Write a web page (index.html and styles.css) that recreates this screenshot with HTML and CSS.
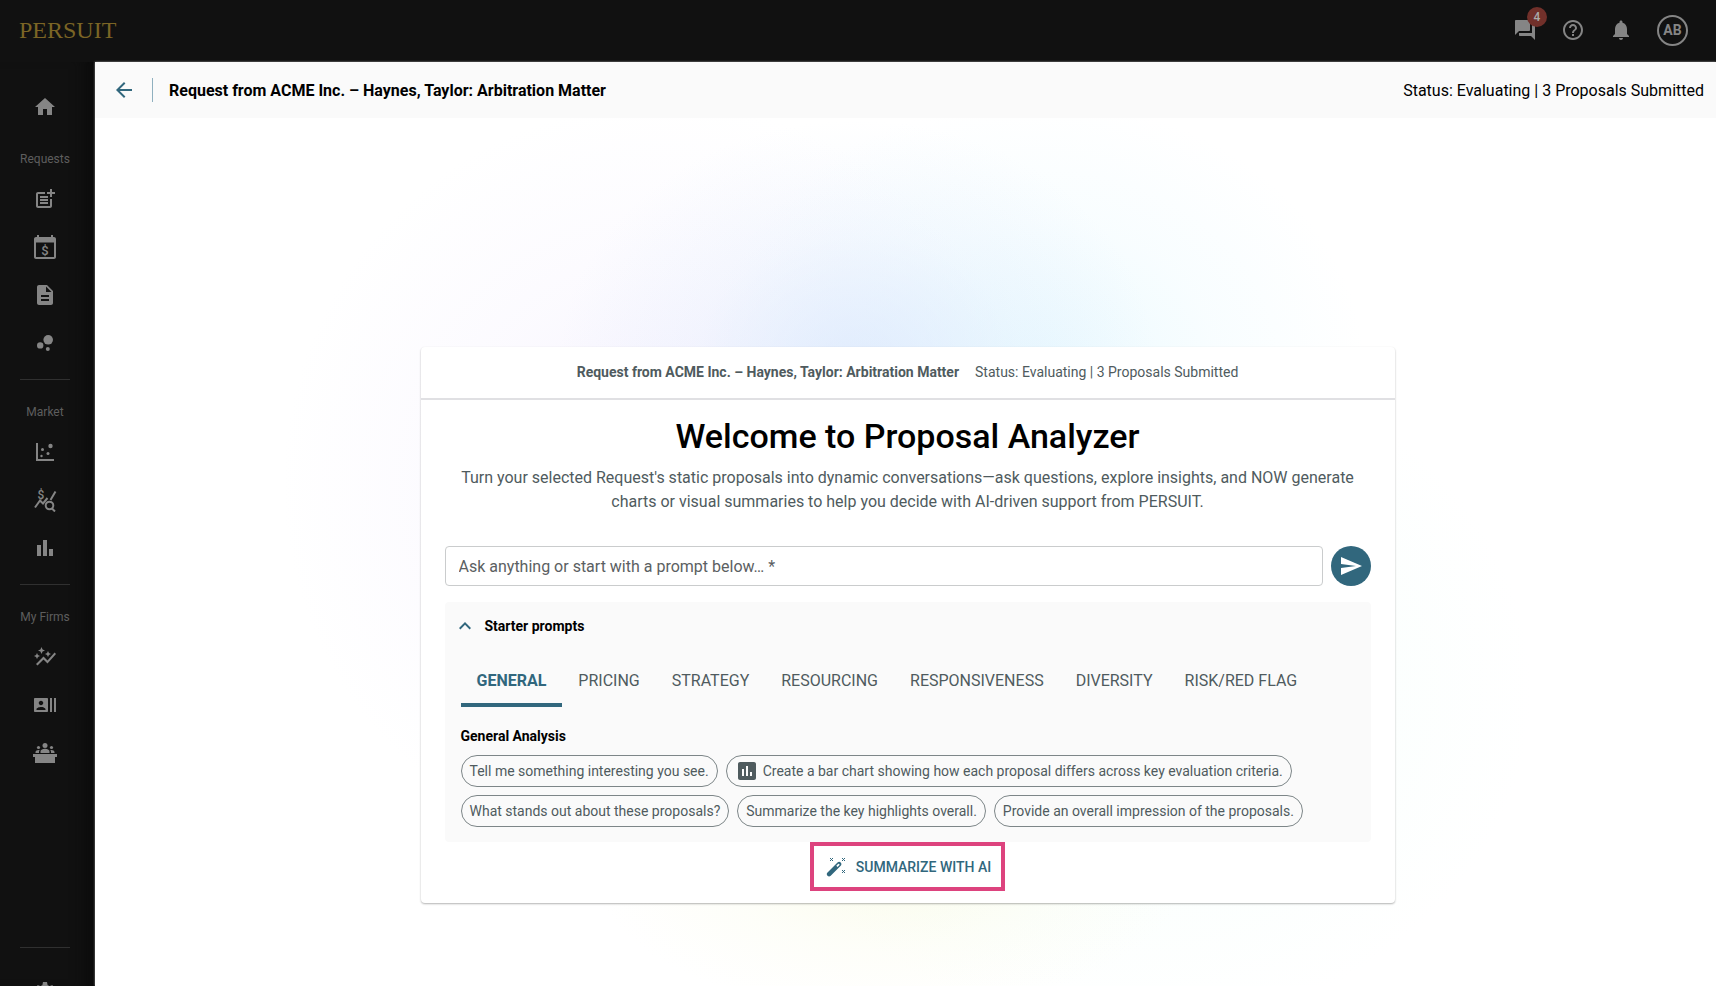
FILE: index.html
```html
<!DOCTYPE html>
<html lang="en">
<head>
  <meta charset="UTF-8">
  <meta name="viewport" content="width=device-width, initial-scale=1.0">
  <title>Proposal Analyzer</title>
  <link rel="stylesheet" href="styles.css">
</head>
<body>
  <header class="topbar">
    <a class="logo" href="#">PERSUIT</a>
    <nav class="topbar-actions" aria-label="Account">
      <button class="icon-btn" aria-label="Messages">
        <svg class="icon" viewBox="0 0 24 24"><path d="M21 6h-2v9H6v2c0 .55.45 1 1 1h11l4 4V7c0-.55-.45-1-1-1zm-4 6V3c0-.55-.45-1-1-1H3c-.55 0-1 .45-1 1v14l4-4h10c.55 0 1-.45 1-1z"/></svg>
        <span class="badge">4</span>
      </button>
      <button class="icon-btn" aria-label="Help">
        <svg class="icon" viewBox="0 0 24 24"><path d="M11 18h2v-2h-2v2zm1-16C6.48 2 2 6.48 2 12s4.48 10 10 10 10-4.48 10-10S17.52 2 12 2zm0 18c-4.41 0-8-3.59-8-8s3.59-8 8-8 8 3.59 8 8-3.59 8-8 8zm0-14c-2.21 0-4 1.79-4 4h2c0-1.1.9-2 2-2s2 .9 2 2c0 2-3 1.75-3 5h2c0-2.25 3-2.5 3-5 0-2.21-1.79-4-4-4z"/></svg>
      </button>
      <button class="icon-btn" aria-label="Notifications">
        <svg class="icon" viewBox="0 0 24 24"><path d="M12 22c1.1 0 2-.9 2-2h-4c0 1.1.89 2 2 2zm6-6v-5c0-3.07-1.64-5.64-4.5-6.32V4c0-.83-.67-1.5-1.5-1.5s-1.5.67-1.5 1.5v.68C7.63 5.36 6 7.92 6 11v5l-2 2v1h16v-1l-2-2z"/></svg>
      </button>
      <button class="avatar">AB</button>
    </nav>
  </header>

  <div class="layout">
    <nav class="sidebar" aria-label="Main">
      <a class="side-link home" href="#" aria-label="Home">
        <svg class="icon" viewBox="0 0 24 24"><path d="M10 20v-6h4v6h5v-8h3L12 3 2 12h3v8z"/></svg>
      </a>
      <div class="side-group">
        <h2 class="side-title">Requests</h2>
        <a class="side-link" href="#" aria-label="New request">
          <svg class="icon" viewBox="0 0 24 24"><path d="M17 19H5V7h7V5H5c-1.1 0-2 .9-2 2v12c0 1.1.9 2 2 2h12c1.1 0 2-.9 2-2v-7h-2zM19 2h-2v3h-3v2h3v3h2V7h3V5h-3zM7 9h8v2H7zM7 12h8v2H7zM7 15h8v2H7z"/></svg>
        </a>
        <a class="side-link" href="#" aria-label="Rates">
          <svg class="icon" viewBox="0 0 24 24"><path fill-rule="evenodd" d="M4 0h2v2h12V0h2v2h1c1.100 0 2 .9 2 2v18c0 1.100-.9 2-2 2H3c-1.100 0-2-.9-2-2V4c0-1.100.9-2 2-2h1zM3 7.500V22h18V7.500z"/><text class="dollar" x="12" y="19.500" font-size="13">$</text></svg>
        </a>
        <a class="side-link" href="#" aria-label="Documents">
          <svg class="icon" viewBox="0 0 24 24"><path d="M14 2H6c-1.100 0-2 .9-2 2v16c0 1.100.9 2 2 2h12c1.100 0 2-.9 2-2V8l-6-6zm2 16H8v-2h8v2zm0-4H8v-2h8v2zm-3-5V3.500L18.500 9H13z"/></svg>
        </a>
        <a class="side-link" href="#" aria-label="Bubbles">
          <svg class="icon" viewBox="0 0 24 24"><circle cx="7.200" cy="14.400" r="3.200"/><circle cx="14.800" cy="18" r="2"/><circle cx="15.200" cy="8.800" r="4.800"/></svg>
        </a>
      </div>
      <div class="side-group">
        <h2 class="side-title">Market</h2>
        <a class="side-link" href="#" aria-label="Scatter">
          <svg class="icon" viewBox="0 0 24 24"><path d="M3 3h2v16h16v2H3z"/><circle cx="17.500" cy="6" r="2.200"/><circle cx="9.500" cy="9.500" r="1.500"/><circle cx="15" cy="13.500" r="1.500"/><circle cx="8.500" cy="16" r="1.200"/></svg>
        </a>
        <a class="side-link" href="#" aria-label="Price search">
          <svg class="icon" viewBox="0 0 24 24"><path class="line" d="M2 19.500l5-7 3 3 4.500-5.500M17.500 12l5-8.500M19 20.500l3 3"/><circle class="line" cx="16.500" cy="17.500" r="3.800"/><text class="dollar" x="8" y="11" font-size="12">$</text></svg>
        </a>
        <a class="side-link" href="#" aria-label="Reports">
          <svg class="icon" viewBox="0 0 24 24"><path d="M4 9h4v11H4zM16 13h4v7h-4zM10 4h4v16h-4z"/></svg>
        </a>
      </div>
      <div class="side-group">
        <h2 class="side-title">My Firms</h2>
        <a class="side-link" href="#" aria-label="Insights">
          <svg class="icon" viewBox="0 0 24 24"><path d="M14.060 9.940L12 9l2.060-.94L15 6l.94 2.060L18 9l-2.060.94L15 12l-.94-2.060zM4 14l.94-2.060L7 11l-2.060-.94L4 8l-.94 2.060L1 11l2.060.94L4 14zm4.500-5l1.090-2.410L12 5.500 9.590 4.410 8.500 2 7.410 4.410 5 5.500l2.410 1.090L8.500 9zm-4 11.500l6-6.010 4 4L23 8.930l-1.410-1.410-7.090 7.970-4-4L3 19l1.500 1.500z"/></svg>
        </a>
        <a class="side-link" href="#" aria-label="Contacts">
          <svg class="icon" viewBox="0 0 24 24"><path fill-rule="evenodd" d="M21 5h2v14h-2zM17 5h2v14h-2zM14 5H2c-.55 0-1 .45-1 1v12c0 .55.45 1 1 1h12c.55 0 1-.45 1-1V6c0-.55-.45-1-1-1zM8 7.750c1.240 0 2.250 1.010 2.250 2.250S9.240 12.250 8 12.250 5.750 11.240 5.750 10 6.760 7.750 8 7.750zM12.500 17h-9v-.75c0-1.500 3-2.250 4.500-2.250s4.500.75 4.500 2.250V17z"/></svg>
        </a>
        <a class="side-link" href="#" aria-label="Panel">
          <svg class="icon" viewBox="0 0 24 24"><circle cx="12" cy="4.500" r="2.500"/><circle cx="5.500" cy="6.500" r="1.600"/><circle cx="18.500" cy="6.500" r="1.600"/><path d="M7.500 12v-1.500c0-2 3-2.800 4.500-2.800s4.500.8 4.500 2.800V12zM2.500 12v-1c0-1.300 1.500-2 3-2 .5 0 .9.100 1.200.2-.5.500-.7 1-.7 1.800v1zM21.500 12v-1c0-1.300-1.500-2-3-2-.5 0-.9.100-1.200.2.5.500.7 1 .7 1.800v1zM0 13h24v3h-2v6H2v-6H0z"/></svg>
        </a>
      </div>
      <div class="side-group side-bottom">
        <a class="side-link" href="#" aria-label="Settings">
          <svg class="icon" viewBox="0 0 24 24"><path fill-rule="evenodd" d="M10 2h4l.6 3 1.900 1.100 2.900-1 2 3.500-2.300 2v2.800l2.300 2-2 3.500-2.900-1-1.900 1.100-.6 3h-4l-.6-3-1.900-1.100-2.900 1-2-3.500 2.300-2v-2.800l-2.300-2 2-3.500 2.900 1L9.400 5zM12 8.500a3.500 3.500 0 100 7 3.500 3.500 0 000-7z"/></svg>
        </a>
      </div>
    </nav>

    <main class="panel">
      <div class="panel-head">
        <button class="back" aria-label="Back">
          <svg class="icon" viewBox="0 0 24 24"><path d="M20 11H7.830l5.590-5.590L12 4l-8 8 8 8 1.410-1.410L7.830 13H20v-2z"/></svg>
        </button>
        <h1 class="panel-title">Request from ACME Inc. – Haynes, Taylor: Arbitration Matter</h1>
        <span class="panel-status">Status: Evaluating | 3 Proposals Submitted</span>
      </div>

      <div class="stage">
        <section class="card">
          <div class="card-head">
            <b>Request from ACME Inc. – Haynes, Taylor: Arbitration Matter</b>
            <span>Status: Evaluating | 3 Proposals Submitted</span>
          </div>
          <div class="card-body">
            <h2 class="welcome">Welcome to Proposal Analyzer</h2>
            <p class="intro">Turn your selected Request's static proposals into dynamic conversations—ask questions, explore insights, and NOW generate charts or visual summaries to help you decide with AI-driven support from PERSUIT.</p>

            <form class="ask">
              <input class="ask-input" type="text" aria-label="Ask anything" placeholder="Ask anything or start with a prompt below… *" required>
              <button class="send" type="button" aria-label="Send">
                <svg class="icon" viewBox="0 0 24 24"><path d="M2 21l21-9L2 3v7l15 2-15 2z"/></svg>
              </button>
            </form>

            <section class="starter">
              <button class="starter-toggle" aria-expanded="true">
                <svg class="icon" viewBox="0 0 24 24"><path d="M12 8l-6 6 1.410 1.410L12 10.830l4.590 4.580L18 14z"/></svg>
                Starter prompts
              </button>
              <div class="tabs" role="tablist">
                <button class="tab active" role="tab" aria-selected="true">GENERAL</button>
                <button class="tab" role="tab">PRICING</button>
                <button class="tab" role="tab">STRATEGY</button>
                <button class="tab" role="tab">RESOURCING</button>
                <button class="tab" role="tab">RESPONSIVENESS</button>
                <button class="tab" role="tab">DIVERSITY</button>
                <button class="tab" role="tab">RISK/RED FLAG</button>
              </div>
              <h3 class="prompt-title">General Analysis</h3>
              <div class="chips">
                <button class="chip">Tell me something interesting you see.</button>
                <button class="chip chip-chart">
                  <svg class="icon" viewBox="0 0 24 24"><path d="M19 3H5c-1.100 0-2 .9-2 2v14c0 1.100.9 2 2 2h14c1.100 0 2-.9 2-2V5c0-1.100-.9-2-2-2zM9 17H7v-7h2v7zm4 0h-2V7h2v10zm4 0h-2v-4h2v4z"/></svg>
                  Create a bar chart showing how each proposal differs across key evaluation criteria.
                </button>
                <button class="chip">What stands out about these proposals?</button>
                <button class="chip">Summarize the key highlights overall.</button>
                <button class="chip">Provide an overall impression of the proposals.</button>
              </div>
            </section>

            <button class="summarize">
              <svg class="icon" viewBox="0 0 24 24"><path fill-rule="evenodd" d="M3.500 17.500L13.500 7.500c1-1 2.300-1 3.200 0s1 2.200 0 3.200L6.700 20.700c-1 1-2.300 1-3.200 0s-1-2.200 0-3.200zM12.300 10.800l1.200 1.200 2-2c.5-.5-.7-1.700-1.200-1.200z"/><path class="spark" d="M6 3l3 3M9 3L6 6M18 3l3 3M21 3l-3 3M18 15l3 3M21 15l-3 3"/></svg>
              SUMMARIZE WITH AI
            </button>
          </div>
        </section>
      </div>
    </main>
  </div>
</body>
</html>
```
FILE: styles.css
```css
html, body {
  margin: 0;
  padding: 0;
  height: 100%;
}
body {
  display: flex;
  flex-direction: column;
  overflow: hidden;
  font-family: Roboto, "Liberation Sans", sans-serif;
  font-size: 14px;
  background: #111;
}
button {
  font: inherit;
  color: inherit;
  background: none;
  border: 0;
  padding: 0;
  cursor: pointer;
}
h1, h2, h3, p {
  margin: 0;
}
.icon {
  width: 24px;
  height: 24px;
  fill: currentColor;
  flex: none;
  display: block;
}
.icon .line {
  fill: none;
  stroke: currentColor;
  stroke-width: 2;
}
.icon .dollar {
  text-anchor: middle;
  font-weight: 500;
}

/* top bar */
.topbar {
  flex: none;
  display: flex;
  align-items: center;
  justify-content: space-between;
  height: 62px;
  padding: 0 28px 2px 19px;
  box-sizing: border-box;
  color: #858585;
}
.logo {
  font-family: "Liberation Serif", serif;
  font-size: 24px;
  color: #7b6525;
  text-decoration: none;
}
.topbar-actions {
  display: flex;
  align-items: center;
  gap: 24px;
}
.icon-btn {
  position: relative;
}
.badge {
  position: absolute;
  top: -11px;
  right: -10px;
  width: 20px;
  height: 20px;
  border-radius: 50%;
  background: #71302a;
  color: #aaa;
  font-size: 12px;
  font-weight: 500;
  line-height: 20px;
}
.avatar {
  width: 31px;
  height: 31px;
  border: 2px solid #858585;
  border-radius: 50%;
  font-weight: 700;
}

/* side bar */
.layout {
  flex: 1;
  min-height: 0;
  display: flex;
}
.sidebar {
  width: 95px;
  flex: none;
  display: flex;
  flex-direction: column;
  overflow: hidden;
  padding: 21px 25px 0 20px;
  box-sizing: border-box;
  color: #858585;
  box-shadow: inset -20px 0 16px -12px #0a0a0a;
}
.side-link {
  display: flex;
  justify-content: center;
  align-items: center;
  height: 48px;
  flex: none;
  color: inherit;
}
.side-group {
  flex: none;
  padding-bottom: 12px;
}
.side-group + .side-group {
  border-top: 1px solid #303030;
}
.side-title {
  margin: 0 -10px;
  padding: 24px 0 8px;
  font-size: 12px;
  font-weight: 400;
  line-height: 16px;
  text-align: center;
  color: #5e5e5e;
}
.home + .side-group .side-title {
  padding-top: 20px;
}
.sidebar .side-bottom {
  margin-top: auto;
  height: 39px;
  padding: 20px 0 0;
  box-sizing: border-box;
}

/* main panel */
.panel {
  flex: 1;
  min-width: 0;
  display: flex;
  flex-direction: column;
  background: #fff;
  box-shadow: 0 0 2px #999;
}
.panel-head {
  display: flex;
  align-items: center;
  height: 56px;
  padding: 0 12px 0 17px;
  background: #fafafa;
  font-size: 16px;
}
.back {
  padding-right: 16px;
  border-right: 1px solid #8fb0bf;
  color: #31677d;
}
.panel-title {
  margin-left: 16px;
  font-size: 16px;
  font-weight: 700;
}
.panel-status {
  margin-left: auto;
}
.stage {
  flex: 1;
  padding: 229px 24px 0 28px;
  background:
    radial-gradient(ellipse 300px 250px at 47% 29%, rgba(212, 228, 252, .65), rgba(212, 228, 252, .2) 55%, rgba(212, 228, 252, 0)),
    radial-gradient(ellipse 330px 270px at 58% 29%, rgba(220, 246, 254, .6), rgba(220, 246, 254, .2) 55%, rgba(220, 246, 254, 0)),
    radial-gradient(ellipse 380px 380px at 35% 42%, rgba(238, 232, 253, .6), rgba(238, 232, 253, .2) 55%, rgba(238, 232, 253, 0)),
    radial-gradient(ellipse 300px 150px at 49% 86%, rgba(248, 250, 222, .6), rgba(248, 250, 222, .2) 55%, rgba(248, 250, 222, 0)),
    radial-gradient(ellipse 400px 340px at 64% 66%, rgba(240, 254, 249, .6), rgba(240, 254, 249, 0)),
    #fff;
}

/* welcome card */
.card {
  max-width: 974px;
  margin: 0 auto;
  background: #fff;
  border-radius: 4px;
  box-shadow: 0 1px 2px rgba(0, 0, 0, .3);
}
.card-head {
  display: flex;
  justify-content: center;
  gap: 16px;
  padding: 15px 24px;
  border-bottom: 2px solid #e0e0e3;
  line-height: 21px;
  color: #4f5b5e;
}
.card-body {
  padding: 16px 24px 12px;
  display: flex;
  flex-direction: column;
}
.welcome {
  font-size: 34px;
  font-weight: 500;
  line-height: 40px;
  text-align: center;
}
.intro {
  margin: 10px 0 32px;
  font-size: 16px;
  line-height: 24px;
  text-align: center;
  color: #4f5b5e;
}
.ask {
  display: flex;
  gap: 8px;
  margin-bottom: 16px;
}
.ask-input {
  flex: 1;
  height: 40px;
  box-sizing: border-box;
  padding: 0 13px;
  border: 1px solid #cacccd;
  border-radius: 4px;
  font: inherit;
  font-size: 16px;
  box-shadow: none;
}
.ask-input::placeholder {
  color: #5b6062;
  opacity: 1;
}
.send {
  width: 40px;
  height: 40px;
  border-radius: 50%;
  background: #31677d;
  color: #fff;
  display: flex;
  align-items: center;
  justify-content: center;
}

/* starter prompts */
.starter {
  padding: 12px 16px 15px;
  background: #fafafa;
  border-radius: 4px;
}
.starter-toggle {
  display: flex;
  align-items: center;
  gap: 8px;
  margin-left: -8px;
  font-weight: 700;
}
.starter-toggle .icon {
  color: #31677d;
}
.tabs {
  display: flex;
  margin: 20px 0;
}
.tab {
  height: 49px;
  padding: 0 16px;
  border-bottom: 4px solid transparent;
  font-size: 16px;
  color: #4f5b5e;
}
.tab.active {
  border-color: #31677d;
  color: #31677d;
  font-weight: 700;
}
.prompt-title {
  margin-bottom: 10px;
  font-size: 14px;
  line-height: 18px;
}
.chips {
  display: flex;
  flex-wrap: wrap;
  gap: 8px;
}
.chip {
  display: flex;
  align-items: center;
  height: 32px;
  padding: 0 8px;
  border: 1px solid #7d8688;
  border-radius: 16px;
  color: #4f5b5e;
}
.chip-chart .icon {
  margin-right: 4px;
}

.summarize {
  display: flex;
  align-items: center;
  align-self: center;
  gap: 8px;
  height: 49px;
  padding: 0 10px;
  border: 4px solid #dd437e;
  color: #31677d;
  font-weight: 500;
}
.summarize .spark {
  stroke: currentColor;
  stroke-width: 1;
}
```
